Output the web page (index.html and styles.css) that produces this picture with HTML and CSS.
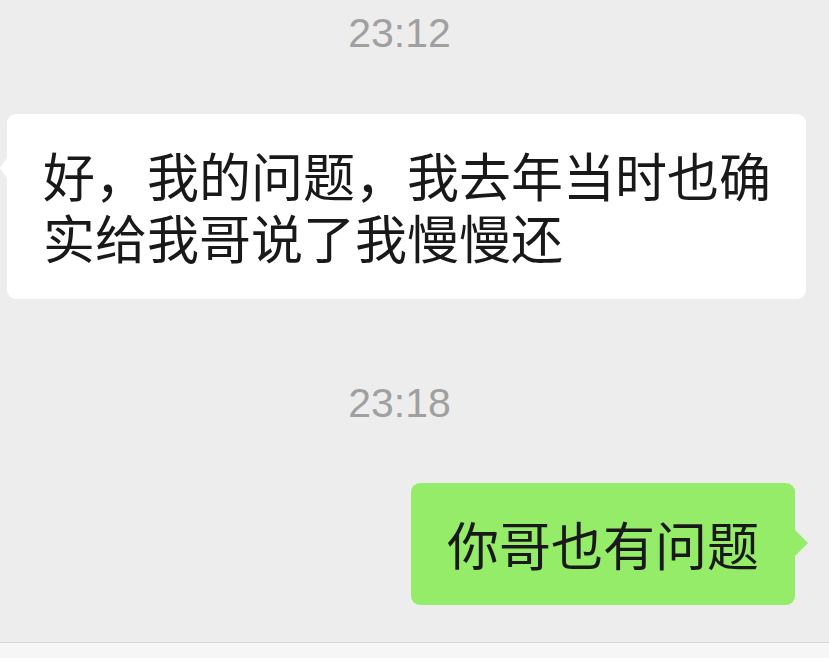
FILE: index.html
```html
<!DOCTYPE html>
<html lang="zh-CN">
<head>
<meta charset="utf-8">
<title>Chat</title>
<link rel="stylesheet" href="styles.css">
</head>
<body>
<div class="chat">
  <div class="time t1">23:12</div>
  <div class="row left">
    <div class="bubble white">好，我的问题，我去年当时也确实给我哥说了我慢慢还</div>
  </div>
  <div class="time t2">23:18</div>
  <div class="row right">
    <div class="bubble green">你哥也有问题</div>
  </div>
</div>
<div class="bar"></div>
</body>
</html>
```
FILE: styles.css
```css
html, body {
  margin: 0;
  padding: 0;
}
body {
  width: 829px;
  height: 658px;
  overflow: hidden;
  background: #ededed;
  font-family: "Noto Sans CJK SC", "Noto Sans", sans-serif;
}
.chat {
  height: 642px;
  display: flex;
  flex-direction: column;
}
.time {
  width: 799px;
  text-align: center;
  font-family: "Liberation Sans", Arial, sans-serif;
  font-size: 41px;
  line-height: 46px;
  color: #a0a0a0;
}
.t1 { margin-top: 10px; }
.t2 { margin-top: 81px; }
.row {
  display: flex;
}
.left { margin-top: 58px; padding-left: 7px; }
.right { margin-top: 57px; justify-content: flex-end; padding-right: 34px; }
.bubble {
  position: relative;
  box-sizing: border-box;
  border-radius: 9px;
  font-size: 52px;
  line-height: 62px;
  color: #191919;
}
.white {
  width: 799px;
  background: #ffffff;
  padding: 30px 30px 31px 36px;
}
.white::before {
  content: "";
  position: absolute;
  left: -7px;
  top: 44px;
  border-top: 10px solid transparent;
  border-bottom: 10px solid transparent;
  border-right: 7px solid #ffffff;
}
.green {
  background: #95ec69;
  padding: 30px 36px 30px 36px;
}
.green::after {
  content: "";
  position: absolute;
  right: -13px;
  top: 47px;
  border-top: 13px solid transparent;
  border-bottom: 13px solid transparent;
  border-left: 13px solid #95ec69;
}
.bar {
  height: 15px;
  border-top: 1px solid #d6d6d6;
  background: #f6f6f6;
}
```
